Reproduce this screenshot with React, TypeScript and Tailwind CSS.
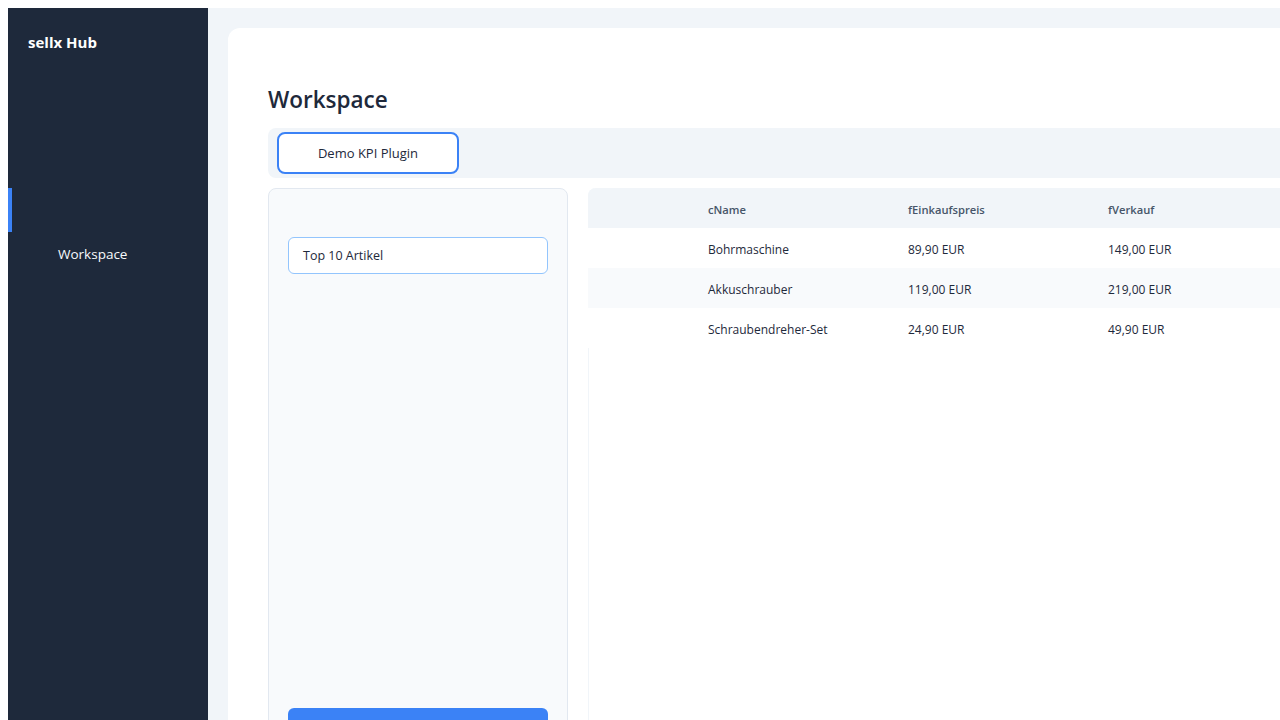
const rows = [
  { name: "Bohrmaschine", ek: "89,90 EUR", vk: "149,00 EUR" },
  { name: "Akkuschrauber", ek: "119,00 EUR", vk: "219,00 EUR" },
  { name: "Schraubendreher-Set", ek: "24,90 EUR", vk: "49,90 EUR" },
];

function Sidebar() {
  return (
    <aside className="w-[200px] shrink-0 bg-[#1e293b] text-white">
      <div className="px-5 pt-6 text-[15px] font-bold leading-5">sellx Hub</div>
      <div className="mt-[136px] h-11 border-l-4 border-[#3b82f6]" />
      <div className="pl-[50px] pt-3 text-[13.5px] leading-5 text-[#f8fafc]">Workspace</div>
    </aside>
  );
}

function App() {
  return (
    <div
      className="h-screen w-screen overflow-hidden bg-white pl-2 pt-2"
      style={{ fontFamily: '"Open Sans", "Noto Sans", sans-serif' }}
    >
      <div className="flex h-[900px] w-[1500px]">
        <Sidebar />
        <main className="flex-1 bg-[#f1f5f9] pl-5 pt-5">
          <div className="h-full rounded-tl-xl bg-white pl-10 pt-14">
            <h1 className="text-[22.5px] font-semibold leading-8 text-[#1e293b]">Workspace</h1>
            <div className="mt-3 flex h-[50px] items-center rounded-l-lg bg-[#f1f5f9] pl-[9px]">
              <button className="h-[42px] w-[182px] rounded-lg border-2 border-[#3b82f6] bg-white pt-px text-[13px] font-medium text-[#1e293b]">
                Demo KPI Plugin
              </button>
            </div>
            <div className="mt-[10px] flex gap-5">
              <div className="flex h-[600px] w-[300px] shrink-0 flex-col rounded-lg border border-[#e2e8f0] bg-[#f8fafc] px-[19px] pt-12">
                <div className="flex h-[37px] items-center rounded-md border border-[#93c5fd] bg-white px-[14px] pt-px text-[12.5px] text-[#1e293b]">
                  Top 10 Artikel
                </div>
                <div className="mt-[434px] h-10 rounded-md bg-[#3b82f6]" />
              </div>
              <div className="flex-1 rounded-tl-lg bg-white shadow-[inset_1px_0_0_#f1f5f9]">
                <div className="flex h-10 items-center rounded-tl-lg bg-[#f1f5f9] pt-1 text-[11.2px] font-semibold text-[#475569]">
                  <div className="w-[120px]" />
                  <div className="w-[200px]">cName</div>
                  <div className="w-[200px]">fEinkaufspreis</div>
                  <div className="w-[200px]">fVerkauf</div>
                </div>
                {rows.map((r, i) => (
                  <div
                    key={r.name}
                    className={
                      "flex h-10 items-center pt-1 text-[12px] text-[#1e293b] " +
                      (i % 2 === 1 ? "bg-[#f8fafc]" : "bg-white")
                    }
                  >
                    <div className="w-[120px]" />
                    <div className="w-[200px]">{r.name}</div>
                    <div className="w-[200px]">{r.ek}</div>
                    <div className="w-[200px]">{r.vk}</div>
                  </div>
                ))}
              </div>
            </div>
          </div>
        </main>
      </div>
    </div>
  );
}

export default App;
